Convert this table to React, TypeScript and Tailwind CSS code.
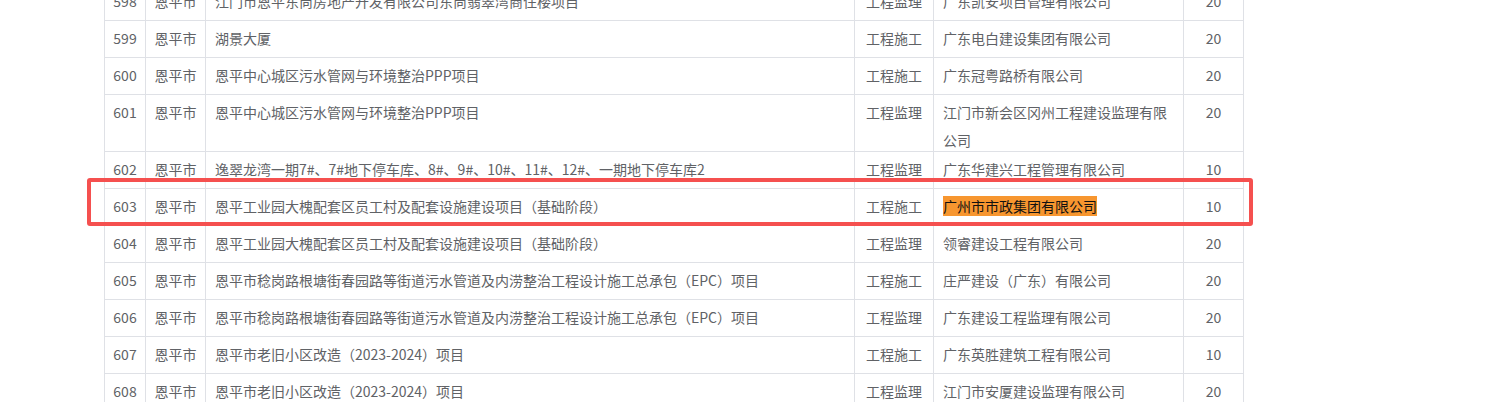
import React from "react";

type Row = [string, string, string, string, string];

const rows: Row[] = [
  ["598", "江门市恩平东尚房地产开发有限公司东尚翡翠湾商住楼项目", "工程监理", "广东凯安项目管理有限公司", "20"],
  ["599", "湖景大厦", "工程施工", "广东电白建设集团有限公司", "20"],
  ["600", "恩平中心城区污水管网与环境整治PPP项目", "工程施工", "广东冠粤路桥有限公司", "20"],
  ["601", "恩平中心城区污水管网与环境整治PPP项目", "工程监理", "江门市新会区冈州工程建设监理有限公司", "20"],
  ["602", "逸翠龙湾一期7#、7#地下停车库、8#、9#、10#、11#、12#、一期地下停车库2", "工程监理", "广东华建兴工程管理有限公司", "10"],
  ["603", "恩平工业园大槐配套区员工村及配套设施建设项目（基础阶段）", "工程施工", "广州市市政集团有限公司", "10"],
  ["604", "恩平工业园大槐配套区员工村及配套设施建设项目（基础阶段）", "工程监理", "领睿建设工程有限公司", "20"],
  ["605", "恩平市稔岗路根塘街春园路等街道污水管道及内涝整治工程设计施工总承包（EPC）项目", "工程施工", "庄严建设（广东）有限公司", "20"],
  ["606", "恩平市稔岗路根塘街春园路等街道污水管道及内涝整治工程设计施工总承包（EPC）项目", "工程监理", "广东建设工程监理有限公司", "20"],
  ["607", "恩平市老旧小区改造（2023-2024）项目", "工程施工", "广东英胜建筑工程有限公司", "10"],
  ["608", "恩平市老旧小区改造（2023-2024）项目", "工程监理", "江门市安厦建设监理有限公司", "20"],
];

export default function App() {
  return (
    <div
      className="relative w-[1507px] h-[402px] overflow-hidden bg-white text-[14px] leading-[20px] text-[#606266]"
      style={{ fontFamily: '"Noto Sans CJK SC", "Noto Sans", sans-serif' }}
    >
      <div className="ml-[104px] mt-[-16px] w-[1140px] border-r border-[#dfe1e6]">
        {rows.map((r) => {
          const hl = r[0] === "603";
          return (
            <div
              key={r[0]}
              className="grid grid-cols-[41px_60px_649px_79px_250px_60px] border-b border-[#dfe1e6]"
            >
              <div className="border-l border-[#dfe1e6] pt-[7px] pb-[9px] text-center">{r[0]}</div>
              <div className="border-l border-[#dfe1e6] pt-[7px] pb-[9px] text-center">恩平市</div>
              <div className="border-l border-[#dfe1e6] pt-[7px] pb-[9px] px-[9px]">{r[1]}</div>
              <div className="border-l border-[#dfe1e6] pt-[7px] pb-[9px] text-center">{r[2]}</div>
              <div className="border-l border-[#dfe1e6] pt-[3px] px-[9px]">
                <div className="leading-[28px] -mb-[3px]">
                  {hl ? (
                    <span className="bg-[#f7962f] text-[#111]">{r[3]}</span>
                  ) : (
                    r[3]
                  )}
                </div>
              </div>
              <div className="border-l border-[#dfe1e6] pt-[7px] pb-[9px] text-center">{r[4]}</div>
            </div>
          );
        })}
      </div>
      <div className="absolute left-[87px] top-[178px] w-[1166px] h-[48px] border-[4px] border-[#f5504f] rounded-[3px]" />
    </div>
  );
}
